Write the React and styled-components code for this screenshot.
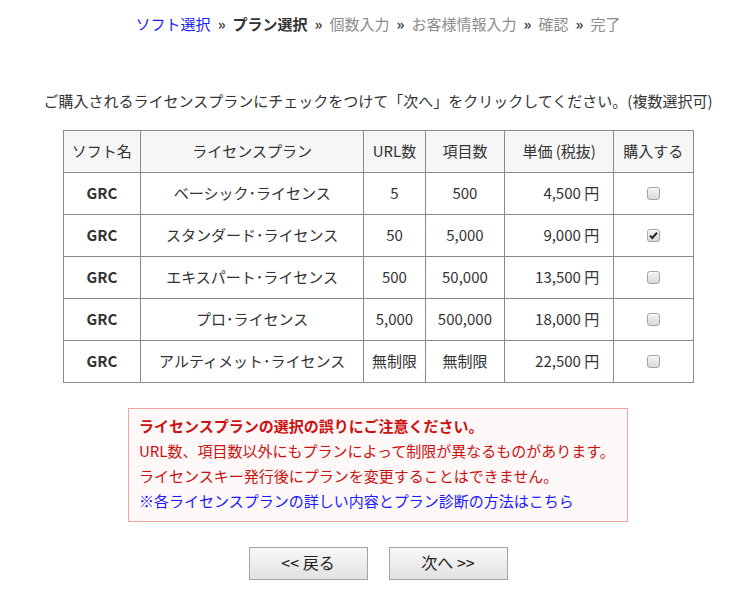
import React, { useState } from "react";
import styled, { createGlobalStyle } from "styled-components";

const Global = createGlobalStyle`
  html, body { margin: 0; padding: 0; background: #fff; }
  body {
    font-family: "Noto Sans CJK JP", "Noto Sans", sans-serif;
    color: #333;
    font-size: 15px;
  }
`;

const Page = styled.div`
  padding: 12px 0 0 19px;
  width: 737px;
  box-sizing: border-box;
  display: flex;
  flex-direction: column;
  align-items: center;
`;

const Crumbs = styled.nav`
  display: flex;
  align-items: center;
  gap: 7px;
  font-size: 15px;
  line-height: 24px;
  height: 24px;
`;

const Crumb = styled.span`
  color: ${(p) => (p.$state === "link" ? "#1a1aff" : p.$state === "current" ? "#333" : "#8c8c8c")};
  font-weight: ${(p) => (p.$state === "current" ? 700 : 400)};
`;

const Sep = styled.span`
  color: #444;
  font-weight: 700;
`;

const Lead = styled.p`
  margin: 53px 0 0;
  font-size: 15px;
  line-height: 24px;
  color: #333;
`;

const Table = styled.table`
  margin-top: 17px;
  border-collapse: collapse;
  width: 631px;
  font-size: 15px;
  color: #333;
`;

const Row = styled.tr`
  height: 42px;
`;

const Th = styled.th`
  font-weight: 400;
  background: #f6f6f6;
  border: 1px solid #8a8a8a;
  padding: 0 0 2px;
  text-align: center;
  width: ${(p) => p.$w}px;
`;

const Td = styled.td`
  border: 1px solid #8a8a8a;
  padding: ${(p) => (p.$right ? "0 14px 3px 0" : "0 0 3px")};
  text-align: ${(p) => (p.$right ? "right" : "center")};
  font-weight: ${(p) => (p.$bold ? 700 : 400)};
  white-space: nowrap;
`;

const CheckCell = styled.td`
  border: 1px solid #8a8a8a;
  padding: 0;
  text-align: center;
`;

const Box = styled.input`
  appearance: none;
  -webkit-appearance: none;
  width: 13px;
  height: 13px;
  margin: 0;
  vertical-align: middle;
  border: 1px solid #a6a6a6;
  border-radius: 3px;
  background: linear-gradient(#f4f4f4, #d9d9d9);
  box-shadow: inset 0 1px 0 #fff;
  position: relative;
  top: -2px;
  &:checked::after {
    content: "";
    position: absolute;
    left: 1px;
    top: 1px;
    width: 9px;
    height: 9px;
    background: url("data:image/svg+xml;utf8,<svg xmlns='http://www.w3.org/2000/svg' viewBox='0 0 9 9'><path d='M1 4.6 L3.4 7 L8 1.6' stroke='%23222' stroke-width='2' fill='none'/></svg>") no-repeat center/9px 9px;
  }
`;

const Notice = styled.div`
  margin-top: 25px;
  width: 500px;
  box-sizing: border-box;
  border: 1px solid #f3a3a3;
  background: #fff8f8;
  padding: 4px 10px 8px;
  font-size: 15px;
  line-height: 25px;
`;

const NoticeLine = styled.div`
  color: ${(p) => (p.$link ? "#1a1aff" : "#cc1111")};
  font-weight: ${(p) => (p.$bold ? 700 : 400)};
  white-space: nowrap;
`;

const Buttons = styled.div`
  margin-top: 25px;
  display: flex;
  gap: 21px;
`;

const Button = styled.button`
  width: 119px;
  height: 33px;
  font-family: "Noto Sans CJK JP", "Noto Sans", sans-serif;
  font-size: 16px;
  line-height: 20px;
  color: #222;
  border: 1px solid #a4a4a4;
  border-radius: 0;
  background: linear-gradient(#f7f7f7, #e2e2e2);
  padding: 0 0 4px;
  cursor: pointer;
`;

const rows = [
  ["ベーシック･ライセンス", "5", "500", "4,500 円", false],
  ["スタンダード･ライセンス", "50", "5,000", "9,000 円", true],
  ["エキスパート･ライセンス", "500", "50,000", "13,500 円", false],
  ["プロ･ライセンス", "5,000", "500,000", "18,000 円", false],
  ["アルティメット･ライセンス", "無制限", "無制限", "22,500 円", false],
];

export default function App() {
  const [checked, setChecked] = useState(rows.map((r) => r[4]));
  const steps = [
    ["ソフト選択", "link"],
    ["プラン選択", "current"],
    ["個数入力", "todo"],
    ["お客様情報入力", "todo"],
    ["確認", "todo"],
    ["完了", "todo"],
  ];
  return (
    <>
      <Global />
      <Page>
        <Crumbs>
          {steps.map(([t, s], i) => (
            <React.Fragment key={t}>
              {i > 0 && <Sep>»</Sep>}
              <Crumb $state={s}>{t}</Crumb>
            </React.Fragment>
          ))}
        </Crumbs>
        <Lead>ご購入されるライセンスプランにチェックをつけて「次へ」をクリックしてください。(複数選択可)</Lead>
        <Table>
          <thead>
            <Row>
              <Th $w={78}>ソフト名</Th>
              <Th $w={223}>ライセンスプラン</Th>
              <Th $w={61}>URL数</Th>
              <Th $w={79}>項目数</Th>
              <Th $w={109}>単価 (税抜)</Th>
              <Th $w={80}>購入する</Th>
            </Row>
          </thead>
          <tbody>
            {rows.map((r, i) => (
              <Row key={r[0]}>
                <Td $bold>GRC</Td>
                <Td>{r[0]}</Td>
                <Td>{r[1]}</Td>
                <Td>{r[2]}</Td>
                <Td $right>{r[3]}</Td>
                <CheckCell>
                  <Box
                    type="checkbox"
                    checked={checked[i]}
                    onChange={() => setChecked(checked.map((c, j) => (j === i ? !c : c)))}
                  />
                </CheckCell>
              </Row>
            ))}
          </tbody>
        </Table>
        <Notice>
          <NoticeLine $bold>ライセンスプランの選択の誤りにご注意ください。</NoticeLine>
          <NoticeLine>URL数、項目数以外にもプランによって制限が異なるものがあります。</NoticeLine>
          <NoticeLine>ライセンスキー発行後にプランを変更することはできません。</NoticeLine>
          <NoticeLine $link>※各ライセンスプランの詳しい内容とプラン診断の方法はこちら</NoticeLine>
        </Notice>
        <Buttons>
          <Button>&lt;&lt; 戻る</Button>
          <Button>次へ &gt;&gt;</Button>
        </Buttons>
      </Page>
    </>
  );
}
